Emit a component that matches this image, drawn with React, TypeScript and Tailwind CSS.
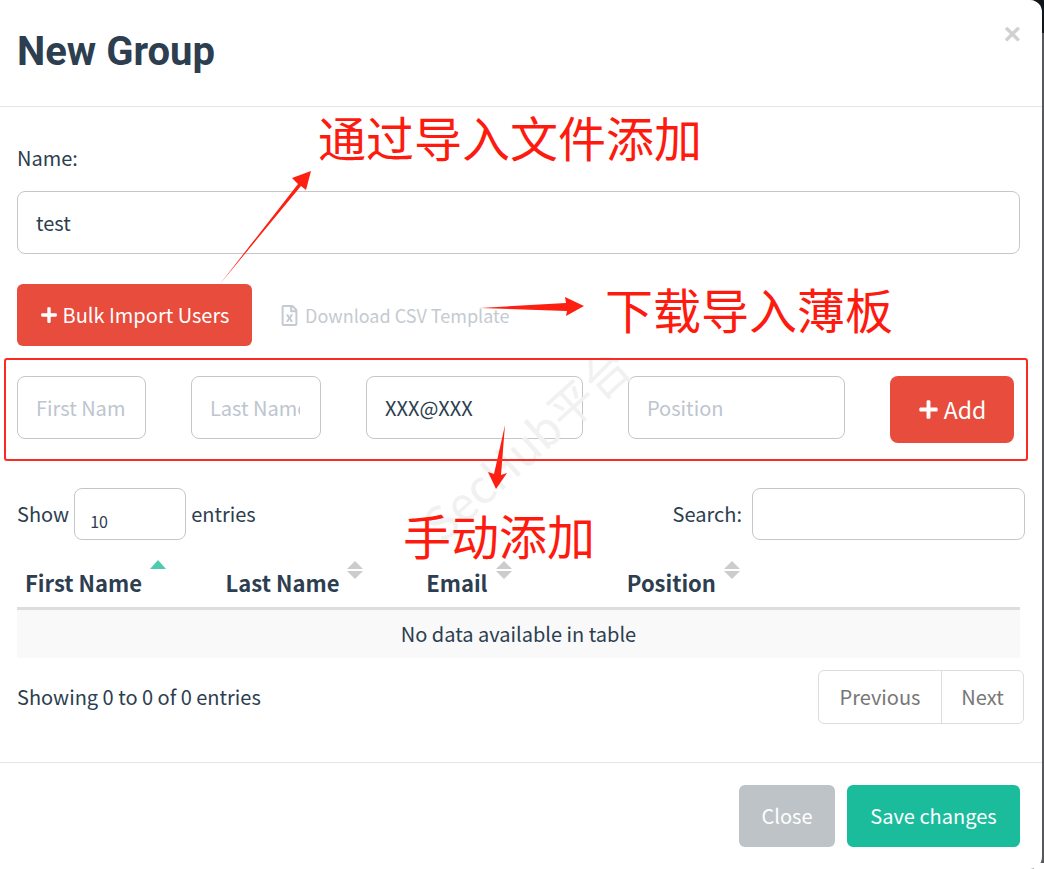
import React from 'react';
import { FaPlus, FaRegFileExcel } from 'react-icons/fa';

const sans = 'font-["Noto_Sans_CJK_SC","Noto_Sans",sans-serif]';

const inputClass =
  'h-[63px] rounded-lg border border-[#c4c6c8] bg-white pl-[18px] pr-5 text-[20px] text-[#2c3e50] outline-none placeholder:text-[#bdc5cf] font-["Noto_Sans_CJK_SC","Noto_Sans",sans-serif]';

/* ================= SORT ARROWS ================= */

const SortIcon = ({ active }: { active?: boolean }) => (
  <svg width="16" height="21" viewBox="0 0 16 21" className="absolute top-[-9px] right-[-24px]">
    {active ? (
      <polygon points="0,10 8,1 16,10" fill="#4ccbae" />
    ) : (
      <>
        <polygon points="0,10 8,2 16,10" fill="#cccccc" />
        <polygon points="0,12 16,12 8,20" fill="#cccccc" />
      </>
    )}
  </svg>
);

const HeadCell = ({ label, active }: { label: string; active?: boolean }) => (
  <th className="w-[200.6px] px-2 pb-[11px] text-left text-[22px] leading-[28px] font-bold text-[#2c3e50]">
    <span className="relative inline-block">
      {label}
      <SortIcon active={active} />
    </span>
  </th>
);

/* ================= ANNOTATIONS ================= */

const Note = ({ className, children }: { className: string; children: React.ReactNode }) => (
  <div
    className={`absolute text-[48px] leading-[56px] whitespace-nowrap text-[#fd1b10] font-["Noto_Sans_CJK_SC",sans-serif] ${className}`}
  >
    {children}
  </div>
);

const Annotations = () => (
  <>
    <div className='absolute left-[396px] top-[415px] -rotate-[42deg] text-[46px] leading-[56px] whitespace-nowrap text-[#f1f1f1] font-["Noto_Sans_CJK_SC",sans-serif]'>
      SecHub平台
    </div>
    <Note className="left-[318px] top-[108px]">通过导入文件添加</Note>
    <Note className="left-[605px] top-[280px]">下载导入薄板</Note>
    <Note className="left-[403px] top-[506px]">手动添加</Note>
    <svg width="1044" height="869" className="pointer-events-none absolute left-0 top-0">
      <polygon points="220,284 298,184 292,178 311,171 306,190 301,186" fill="#fd1f10" />
      <polygon points="480,308 566,303 565,297 584,306 566,316 567,311" fill="#fd1f10" />
      <polygon points="505,425 501,475 507,473 496,489 488,472 494,474" fill="#fd1f10" />
    </svg>
    <div className="absolute left-[4px] top-[358px] h-[103px] w-[1024px] rounded-[3px] border-2 border-[#fb2a22]" />
  </>
);

/* ================= APP ================= */

export default function App() {
  return (
    <div className={`relative h-[869px] w-[1044px] overflow-hidden bg-[#55585c] ${sans}`}>
      <div className="absolute right-0 top-0 h-[33px] w-[10px] bg-[#10151c]" />
      <div className="absolute bottom-0 right-0 h-[6px] w-[10px] bg-white" />
      <div className="relative h-full w-[1042px] rounded-tr-[12px] rounded-br-[12px] bg-white text-[#2c3e50]">
        {/* Header */}
        <header className="relative h-[107px] border-b border-[#e5e5e5] pl-[17px] pt-[23px]">
          <h1 className='text-[40px] leading-[58px] font-bold text-[#2c3e50] font-["Roboto",sans-serif]'>
            New Group
          </h1>
          <span className='absolute right-[21px] top-[14px] text-[30px] leading-[40px] font-bold text-[#d0d0d0] font-["Liberation_Sans",sans-serif]'>
            ×
          </span>
        </header>

        {/* Body */}
        <div className="px-[17px]">
          <label className="mt-[36px] block text-[20px] leading-[30px]">Name:</label>
          <input readOnly value="test" className={`mt-[18px] block w-[1003px] ${inputClass}`} />

          <div className="mt-[30px] flex items-center">
            <button className="flex h-[62px] w-[235px] items-center justify-center gap-[5px] rounded-md bg-[#e74c3c] text-[20px] text-white">
              <FaPlus size={18} />
              Bulk Import Users
            </button>
            <a className="ml-[27px] flex items-center gap-[5px] text-[18px] text-[#c5cad0]">
              <FaRegFileExcel size={21} />
              Download CSV Template
            </a>
          </div>

          {/* Manual add row */}
          <div className="mt-[30px] flex items-start">
            <input readOnly placeholder="First Name" className={`w-[129px] ${inputClass}`} />
            <input readOnly placeholder="Last Name" className={`ml-[45px] w-[130px] ${inputClass}`} />
            <input readOnly value="XXX@XXX" className={`ml-[45px] w-[217px] ${inputClass}`} />
            <input readOnly placeholder="Position" className={`ml-[45px] w-[217px] ${inputClass}`} />
            <button className="ml-[45px] flex h-[67px] w-[124px] items-center justify-center gap-[5px] rounded-lg bg-[#e74c3c] text-[23px] text-white">
              <FaPlus size={21} />
              Add
            </button>
          </div>

          {/* Table controls */}
          <div className="mt-[45px] flex h-[52px] items-center justify-between text-[20px]">
            <div className="flex items-center">
              Show
              <div className="mx-[5px] flex h-[52px] w-[112px] items-end rounded-lg border border-[#c4c6c8] pb-[6px] pl-[15px] text-[16px]">
                10
              </div>
              entries
            </div>
            <div className="flex items-center gap-[10px]">
              Search:
              <input readOnly className="h-[52px] w-[273px] rounded-lg border border-[#c4c6c8] outline-none" />
            </div>
          </div>

          {/* Table */}
          <table className="mt-[28px] w-[1003px] table-fixed border-collapse">
            <thead>
              <tr className="border-b-[3px] border-[#dddddd]">
                <HeadCell label="First Name" active />
                <HeadCell label="Last Name" />
                <HeadCell label="Email" />
                <HeadCell label="Position" />
                <th />
              </tr>
            </thead>
            <tbody>
              <tr className="bg-[#f9f9f9]">
                <td colSpan={5} className="h-[49px] text-center text-[20px]">
                  No data available in table
                </td>
              </tr>
            </tbody>
          </table>

          {/* Pagination */}
          <div className="mt-[12px] flex items-center justify-between text-[20px]">
            <span>Showing 0 to 0 of 0 entries</span>
            <div className="mr-[1px] flex h-[54px] rounded-md border border-[#dddddd] text-[#777777]">
              <span className="flex w-[123px] items-center justify-center border-r border-[#dddddd]">Previous</span>
              <span className="flex w-[81px] items-center justify-center">Next</span>
            </div>
          </div>
        </div>

        {/* Footer */}
        <footer className="mt-[38px] flex justify-end gap-3 border-t border-[#e5e5e5] pr-[22px] pt-[22px]">
          <button className="h-[62px] w-[96px] rounded-md bg-[#bdc3c7] text-[20px] text-white">Close</button>
          <button className="h-[62px] w-[173px] rounded-md bg-[#1abc9c] text-[20px] text-white">Save changes</button>
        </footer>
      </div>

      <Annotations />
    </div>
  );
}
